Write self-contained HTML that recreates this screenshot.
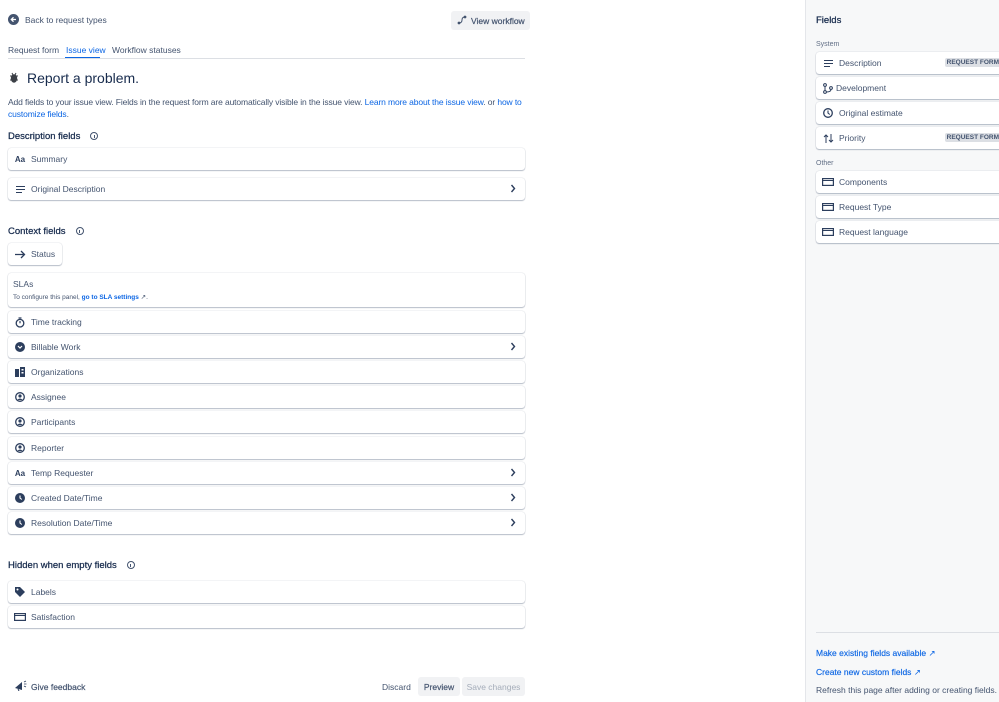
<!DOCTYPE html>
<html><head><meta charset="utf-8"><style>
*{box-sizing:border-box;margin:0;padding:0}
body{width:999px;height:702px;overflow:hidden;background:#fff;font-family:"Liberation Sans",sans-serif;font-size:8.5px;color:#172b4d;position:relative}
.a{position:absolute}
.card{position:absolute;left:8px;width:517px;height:22px;background:#fff;border-radius:3px;box-shadow:0 1px 1px rgba(9,30,66,.25),0 0 1px rgba(9,30,66,.31);display:flex;align-items:center;padding-left:6px;color:#44546f}
.card .ic{width:12px;height:12px;margin-right:5px;display:flex;align-items:center;justify-content:center;color:#2c3e5d}
.chev{position:absolute;right:9px;top:6px}
h3{position:absolute;left:8px;font-size:9.5px;color:#172b4d;font-weight:normal;-webkit-text-stroke:.25px #172b4d}
.info{display:inline-block;width:8px;height:8px;border:1px solid #44546f;border-radius:50%;margin-left:10px;vertical-align:-1px;position:relative}
.info:after{content:"";position:absolute;left:2.5px;top:2px;width:1px;height:3px;background:#44546f}
.side{position:absolute;left:805px;top:0;width:194px;height:702px;background:#f7f8f9;border-left:1px solid #e4e6ea}
.sc{position:absolute;left:10px;width:186px;height:22px;background:#fff;border-radius:3px;box-shadow:0 1px 1px rgba(9,30,66,.25),0 0 1px rgba(9,30,66,.31);display:flex;align-items:center;padding-left:6px;color:#44546f}
.sc .ic{width:12px;margin-right:5px;display:flex;justify-content:center;color:#2c3e5d}
.lz{position:absolute;right:1px;top:6px;background:#dcdfe4;color:#44546f;font-size:6.5px;font-weight:bold;padding:1px 2px;border-radius:2px}
a{color:#0c66e4;text-decoration:none}
</style></head><body>

<div class="a" style="left:8px;top:14px;width:11px;height:11px;border-radius:50%;background:#44546f"></div>
<svg class="a" style="left:10px;top:16px" width="7" height="7" viewBox="0 0 7 7"><path d="M6 3.5H1.5M3.5 1.3L1.3 3.5 3.5 5.7" stroke="#fff" stroke-width="1.3" fill="none"/></svg>
<div class="a" style="left:25px;top:15px;color:#44546f">Back to request types</div>
<div class="a" style="left:451px;top:11px;width:79px;height:19px;background:#f1f2f4;border-radius:3px;color:#44546f;padding:5px 0 0 20px;-webkit-text-stroke:.2px #44546f">View workflow</div>
<svg class="a" style="left:457px;top:15px" width="10" height="10" viewBox="0 0 10 10"><circle cx="2" cy="8" r="1.4" fill="#44546f"/><circle cx="8" cy="2" r="1.4" fill="#44546f"/><path d="M2 8 Q5 8 5 5 Q5 2 8 2" stroke="#44546f" fill="none" stroke-width="1"/></svg>

<div class="a" style="left:8px;top:45px;color:#44546f">Request form</div>
<div class="a" style="left:66px;top:45px;color:#0c66e4">Issue view</div>
<div class="a" style="left:65px;top:57px;width:35px;height:2px;background:#0c66e4"></div>
<div class="a" style="left:112px;top:45px;color:#44546f">Workflow statuses</div>
<div class="a" style="left:8px;top:58px;width:517px;height:1px;background:#dcdfe4"></div>

<svg class="a" style="left:9px;top:71px" width="10" height="13" viewBox="0 0 10 13"><ellipse cx="5" cy="7.5" rx="3.2" ry="4.2" fill="#3b3f46"/><path d="M1 5h8M1 9h8M3 2l1 2M7 2l-1 2" stroke="#3b3f46" stroke-width="1"/></svg>
<div class="a" style="left:27px;top:70px;font-size:14px;color:#172b4d">Report a problem.</div>
<div class="a" style="left:8px;top:97px;width:520px;line-height:11.5px;color:#44546f;letter-spacing:-0.12px">Add fields to your issue view. Fields in the request form are automatically visible in the issue view. <a>Learn more about the issue view</a>. or <a>how to customize fields</a>.</div>

<h3 style="top:131px">Description fields<span class="info"></span></h3>
<div class="card" style="top:148px"><span class="ic" style="font-weight:bold;font-size:8px">Aa</span>Summary</div>
<div class="card" style="top:178px"><span class="ic"><svg width="9" height="7"><path d="M0 .5h9M0 3.5h9M0 6.5h6" stroke="#2c3e5d"/></svg></span>Original Description<svg class="chev" width="6" height="9"><path d="M1.5 1l3 3.5-3 3.5" stroke="#2c3e5d" stroke-width="1.4" fill="none"/></svg></div>

<h3 style="top:226px">Context fields<span class="info"></span></h3>
<div class="card" style="top:243px;width:54px"><span class="ic"><svg width="11" height="9"><path d="M0 4.5h9.5M6 1l3.5 3.5L6 8" stroke="#2c3e5d" stroke-width="1.3" fill="none"/></svg></span>Status</div>
<div class="card" style="top:273px;height:34px;display:block;padding:6px 0 0 5px"><div>SLAs</div><div style="font-size:6.5px;margin-top:4px">To configure this panel, <a style="font-weight:bold">go to SLA settings</a> ↗.</div></div>

<div class="card" style="top:311px"><span class="ic"><svg width="10" height="11"><circle cx="5" cy="6.2" r="3.8" stroke="#2c3e5d" stroke-width="1.3" fill="none"/><path d="M3.5 1h3M5 6.2V4" stroke="#2c3e5d" stroke-width="1.2"/></svg></span>Time tracking</div>
<div class="card" style="top:336px"><span class="ic"><svg width="10" height="10"><circle cx="5" cy="5" r="5" fill="#2c3e5d"/><path d="M3 4l2 2 2-2" stroke="#fff" stroke-width="1.2" fill="none"/></svg></span>Billable Work<svg class="chev" width="6" height="9"><path d="M1.5 1l3 3.5-3 3.5" stroke="#2c3e5d" stroke-width="1.4" fill="none"/></svg></div>
<div class="card" style="top:361px"><span class="ic"><svg width="10" height="10"><rect x="0" y="2" width="4" height="8" fill="#2c3e5d"/><rect x="5" y="0" width="5" height="10" fill="#2c3e5d"/><rect x="6.5" y="2" width="2" height="1.5" fill="#fff"/><rect x="6.5" y="5" width="2" height="1.5" fill="#fff"/></svg></span>Organizations</div>
<div class="card" style="top:386px"><span class="ic"><svg width="10" height="10"><circle cx="5" cy="5" r="4.3" stroke="#2c3e5d" stroke-width="1.3" fill="none"/><circle cx="5" cy="4" r="1.6" fill="#2c3e5d"/><path d="M2.3 8Q5 5 7.7 8" fill="#2c3e5d"/></svg></span>Assignee</div>
<div class="card" style="top:411px"><span class="ic"><svg width="10" height="10"><circle cx="5" cy="5" r="4.3" stroke="#2c3e5d" stroke-width="1.3" fill="none"/><circle cx="5" cy="4" r="1.6" fill="#2c3e5d"/><path d="M2.3 8Q5 5 7.7 8" fill="#2c3e5d"/></svg></span>Participants</div>
<div class="card" style="top:437px"><span class="ic"><svg width="10" height="10"><circle cx="5" cy="5" r="4.3" stroke="#2c3e5d" stroke-width="1.3" fill="none"/><circle cx="5" cy="4" r="1.6" fill="#2c3e5d"/><path d="M2.3 8Q5 5 7.7 8" fill="#2c3e5d"/></svg></span>Reporter</div>
<div class="card" style="top:462px"><span class="ic" style="font-weight:bold;font-size:8px">Aa</span>Temp Requester<svg class="chev" width="6" height="9"><path d="M1.5 1l3 3.5-3 3.5" stroke="#2c3e5d" stroke-width="1.4" fill="none"/></svg></div>
<div class="card" style="top:487px"><span class="ic"><svg width="10" height="10"><circle cx="5" cy="5" r="5" fill="#2c3e5d"/><path d="M5 2.5V5l1.8 1.5" stroke="#fff" stroke-width="1.1" fill="none"/></svg></span>Created Date/Time<svg class="chev" width="6" height="9"><path d="M1.5 1l3 3.5-3 3.5" stroke="#2c3e5d" stroke-width="1.4" fill="none"/></svg></div>
<div class="card" style="top:512px"><span class="ic"><svg width="10" height="10"><circle cx="5" cy="5" r="5" fill="#2c3e5d"/><path d="M5 2.5V5l1.8 1.5" stroke="#fff" stroke-width="1.1" fill="none"/></svg></span>Resolution Date/Time<svg class="chev" width="6" height="9"><path d="M1.5 1l3 3.5-3 3.5" stroke="#2c3e5d" stroke-width="1.4" fill="none"/></svg></div>

<h3 style="top:560px">Hidden when empty fields<span class="info"></span></h3>
<div class="card" style="top:581px"><span class="ic"><svg width="10" height="10"><path d="M0 0h5l5 5-5 5-5-5z" fill="#2c3e5d"/><circle cx="2.5" cy="2.5" r="1" fill="#fff"/></svg></span>Labels</div>
<div class="card" style="top:606px"><span class="ic"><svg width="12" height="8"><rect x=".6" y=".6" width="10.8" height="6.8" stroke="#2c3e5d" stroke-width="1.2" fill="none"/><path d="M.6 2.5h11" stroke="#2c3e5d"/></svg></span>Satisfaction</div>

<svg class="a" style="left:15px;top:680px" width="12" height="11" viewBox="0 0 12 11"><path d="M0 8L7 2v8z" fill="#2c3e5d"/><path d="M3 9l1 2" stroke="#2c3e5d"/><path d="M9 2l2-1M9 4h2.5M9 6l2 1" stroke="#2c3e5d" stroke-width=".8"/></svg>
<div class="a" style="left:31px;top:682px;color:#44546f;-webkit-text-stroke:.2px #44546f">Give feedback</div>
<div class="a" style="left:382px;top:682px;color:#44546f">Discard</div>
<div class="a" style="left:418px;top:677px;width:42px;height:19px;background:#f1f2f4;border-radius:3px;color:#44546f;padding-top:5px;text-align:center;-webkit-text-stroke:.2px #44546f">Preview</div>
<div class="a" style="left:462px;top:677px;width:63px;height:19px;background:#f1f2f4;border-radius:3px;color:#a5adba;padding-top:5px;text-align:center">Save changes</div>

<div class="side">
<div class="a" style="left:10px;top:15px;font-size:9.5px;-webkit-text-stroke:.25px #172b4d">Fields</div>
<div class="a" style="left:10px;top:41px;font-size:7px;color:#626f86">System</div>
<div class="sc" style="top:52px"><span class="ic"><svg width="9" height="7"><path d="M0 .5h9M0 3.5h9M0 6.5h6" stroke="#2c3e5d"/></svg></span>Description<span class="lz">REQUEST FORM</span></div>
<div class="sc" style="top:77px"><span class="ic"><svg width="10" height="11"><circle cx="2" cy="2" r="1.4" stroke="#2c3e5d" fill="none"/><circle cx="2" cy="9" r="1.4" stroke="#2c3e5d" fill="none"/><circle cx="8" cy="5" r="1.4" stroke="#2c3e5d" fill="none"/><path d="M2 3.4v4.2M8 6.4Q8 9 3.4 9" stroke="#2c3e5d" fill="none"/></svg></span><span style="margin-left:-3px">Development</span></div>
<div class="sc" style="top:102px"><span class="ic"><svg width="10" height="10"><circle cx="5" cy="5" r="4.3" stroke="#2c3e5d" stroke-width="1.3" fill="none"/><path d="M5 2.5V5l1.8 1.5" stroke="#2c3e5d" stroke-width="1.1" fill="none"/></svg></span>Original estimate</div>
<div class="sc" style="top:127px"><span class="ic"><svg width="11" height="9"><path d="M3 9V1M1 3l2-2 2 2M8 0v8M6 6l2 2 2-2" stroke="#2c3e5d" fill="none"/></svg></span>Priority<span class="lz">REQUEST FORM</span></div>
<div class="a" style="left:10px;top:160px;font-size:7px;color:#626f86">Other</div>
<div class="sc" style="top:171px"><span class="ic"><svg width="12" height="8"><rect x=".6" y=".6" width="10.8" height="6.8" stroke="#2c3e5d" stroke-width="1.2" fill="none"/><path d="M.6 2.5h11" stroke="#2c3e5d"/></svg></span>Components</div>
<div class="sc" style="top:196px"><span class="ic"><svg width="12" height="8"><rect x=".6" y=".6" width="10.8" height="6.8" stroke="#2c3e5d" stroke-width="1.2" fill="none"/><path d="M.6 2.5h11" stroke="#2c3e5d"/></svg></span>Request Type</div>
<div class="sc" style="top:221px"><span class="ic"><svg width="12" height="8"><rect x=".6" y=".6" width="10.8" height="6.8" stroke="#2c3e5d" stroke-width="1.2" fill="none"/><path d="M.6 2.5h11" stroke="#2c3e5d"/></svg></span>Request language</div>
<div class="a" style="left:10px;top:632px;width:190px;height:1px;background:#dcdfe4"></div>
<div class="a" style="left:10px;top:648px"><a style="-webkit-text-stroke:.15px #0c66e4">Make existing fields available</a> <span style="color:#0c66e4">↗</span></div>
<div class="a" style="left:10px;top:667px"><a style="-webkit-text-stroke:.15px #0c66e4">Create new custom fields</a> <span style="color:#0c66e4">↗</span></div>
<div class="a" style="left:10px;top:685px;color:#44546f">Refresh this page after adding or creating fields.</div>
</div>
</body></html>
